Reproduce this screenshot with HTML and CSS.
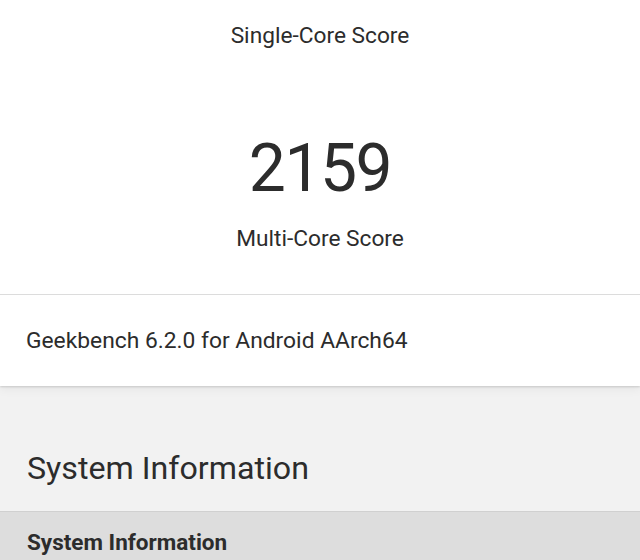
FILE: index.html
```html
<!DOCTYPE html>
<html>
<head>
<meta charset="utf-8">
<link rel="stylesheet" href="styles.css">
</head>
<body>
<div class="card">
  <div class="scores">
    <div class="label label-single">Single-Core Score</div>
    <div class="score">2159</div>
    <div class="label">Multi-Core Score</div>
  </div>
  <div class="version">Geekbench 6.2.0 for Android AArch64</div>
</div>
<h2 class="section-title">System Information</h2>
<div class="table-head">System Information</div>
</body>
</html>
```
FILE: styles.css
```css
html, body {
  margin: 0;
  padding: 0;
}
body {
  background: #f2f2f2;
  font-family: Roboto, "Noto Sans", sans-serif;
  color: #2c2c2c;
  width: 640px;
  height: 560px;
  overflow: hidden;
}
.card {
  background: #ffffff;
  box-shadow: 0 1px 2px rgba(0, 0, 0, 0.14), 0 3px 10px rgba(0, 0, 0, 0.06);
}
.scores {
  display: flex;
  flex-direction: column;
  align-items: center;
  padding: 21px 0 40px;
  border-bottom: 1px solid #dcdcdc;
}
.label {
  font-size: 22.7px;
  line-height: 30px;
}
.score {
  font-size: 66px;
  line-height: 80px;
  margin: 78px 0 15px;
  letter-spacing: -1.5px;
}
.version {
  font-size: 22.8px;
  line-height: 30px;
  padding: 31px 26px 30px;
}
.section-title {
  margin: 0;
  font-weight: 400;
  font-size: 32.2px;
  line-height: 40px;
  padding: 62px 27px 23px;
}
.table-head {
  background: #dddddd;
  border-top: 1px solid #d0d0d0;
  font-weight: 700;
  font-size: 22.5px;
  line-height: 30px;
  padding: 15px 27px 10px;
}
```
